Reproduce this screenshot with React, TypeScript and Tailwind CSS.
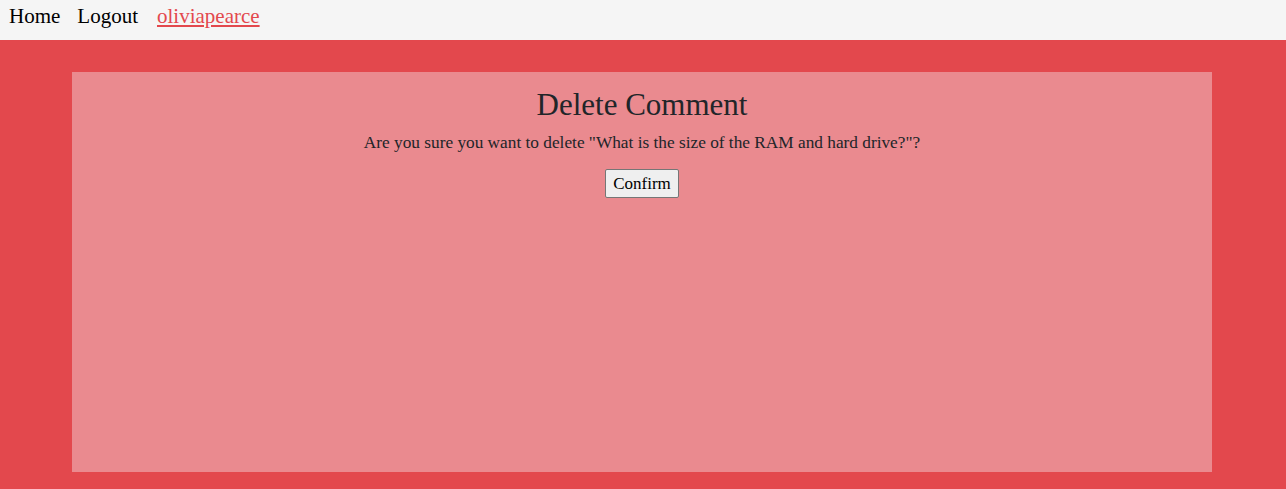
export default function App() {
    return (
        <div className="min-h-screen bg-[#e3484d] font-['Liberation_Serif',serif] text-[#212529]">
            <nav className="h-10 bg-[#f5f5f5] flex items-center px-[9px] pb-[6px] gap-[17px] text-[21px] text-black">
                <a href="#">Home</a>
                <a href="#">Logout</a>
                <a href="#" className="ml-[2px] text-[#e3484d] underline">oliviapearce</a>
            </nav>
            <main className="pt-8 pb-8">
                <div className="ml-[72px] w-[1140px] bg-[#ea8a8f] min-h-[400px] flex flex-col items-center pt-[13px]">
                    <h1 className="text-[31px] leading-[40px]">Delete Comment</h1>
                    <p className="mt-[6px] text-[17.3px] leading-6">
                        Are you sure you want to delete "What is the size of the RAM and hard drive?"?
                    </p>
                    <button className="mt-[14px] px-[7px] h-[29px] text-[17px] text-black bg-[#efefef] border border-[#767676] rounded-[2px]">
                        Confirm
                    </button>
                </div>
            </main>
        </div>
    )
}
